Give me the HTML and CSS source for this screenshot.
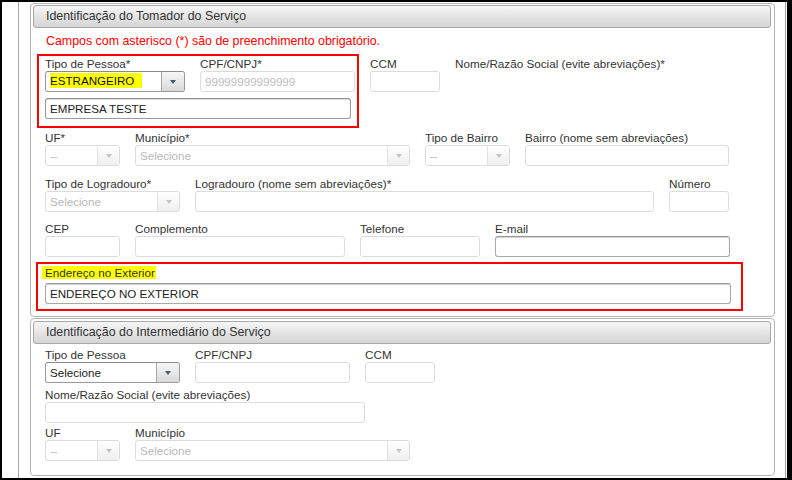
FILE: index.html
```html
<!DOCTYPE html>
<html lang="pt-BR">
<head>
<meta charset="utf-8">
<title>Identificação do Tomador do Serviço</title>
<link rel="stylesheet" href="styles.css">
</head>
<body>
<div class="screen">
  <div class="page">
    <section class="panel p1">
      <div class="phead">Identificação do Tomador do Serviço</div>
      <div class="pbody">
        <p class="note">Campos com asterisco (*) são de preenchimento obrigatório.</p>

        <div class="row r1">
          <div class="redbox rb1">
            <div class="row">
              <div class="field">
                <label>Tipo de Pessoa*</label>
                <div class="ctl sel on w140"><span class="v"><span class="hl">ESTRANGEIRO</span></span><span class="b"><i></i></span></div>
              </div>
              <div class="field">
                <label>CPF/CNPJ*</label>
                <div class="ctl dis w155">99999999999999</div>
              </div>
            </div>
            <div class="ctl on w306 mt6">EMPRESA TESTE</div>
          </div>
          <div class="field pt3 ccm1">
            <label>CCM</label>
            <div class="ctl w70"></div>
          </div>
          <div class="field pt3 nome1">
            <label>Nome/Razão Social (evite abreviações)*</label>
          </div>
        </div>

        <div class="row r2">
          <div class="field"><label>UF*</label><div class="ctl sel w75"><span class="v dim">--</span><span class="b"><i></i></span></div></div>
          <div class="field"><label>Município*</label><div class="ctl sel w275"><span class="v dim">Selecione</span><span class="b"><i></i></span></div></div>
          <div class="field"><label>Tipo de Bairro</label><div class="ctl sel w85"><span class="v dim">--</span><span class="b"><i></i></span></div></div>
          <div class="field"><label>Bairro (nome sem abreviações)</label><div class="ctl w204"></div></div>
        </div>

        <div class="row r3">
          <div class="field"><label>Tipo de Logradouro*</label><div class="ctl sel w135"><span class="v dim">Selecione</span><span class="b"><i></i></span></div></div>
          <div class="field"><label>Logradouro (nome sem abreviações)*</label><div class="ctl w459"></div></div>
          <div class="field"><label>Número</label><div class="ctl w60"></div></div>
        </div>

        <div class="row r4">
          <div class="field"><label>CEP</label><div class="ctl w75"></div></div>
          <div class="field"><label>Complemento</label><div class="ctl w210"></div></div>
          <div class="field"><label>Telefone</label><div class="ctl w120"></div></div>
          <div class="field"><label>E-mail</label><div class="ctl focus w235"></div></div>
        </div>

        <div class="redbox rb2">
          <label class="lbl2"><span class="hl2">Endereço no Exterior</span></label>
          <div class="ctl on2 w686">ENDEREÇO NO EXTERIOR</div>
        </div>
      </div>
    </section>

    <section class="panel p2">
      <div class="phead">Identificação do Intermediário do Serviço</div>
      <div class="pbody">
        <div class="row q1">
          <div class="field"><label>Tipo de Pessoa</label><div class="ctl sel on w135"><span class="v">Selecione</span><span class="b"><i></i></span></div></div>
          <div class="field"><label>CPF/CNPJ</label><div class="ctl w155"></div></div>
          <div class="field"><label>CCM</label><div class="ctl w70"></div></div>
        </div>
        <div class="row q2">
          <div class="field"><label>Nome/Razão Social (evite abreviações)</label><div class="ctl w320"></div></div>
        </div>
        <div class="row q3">
          <div class="field"><label>UF</label><div class="ctl sel w75"><span class="v dim">--</span><span class="b"><i></i></span></div></div>
          <div class="field"><label>Município</label><div class="ctl sel w275"><span class="v dim">Selecione</span><span class="b"><i></i></span></div></div>
        </div>
      </div>
    </section>
  </div>
</div>
</body>
</html>
```

FILE: styles.css
```css
* { box-sizing: border-box; }
html, body { margin: 0; padding: 0; background: #fff; }
body { font-family: "Liberation Sans", Arial, sans-serif; color: #333; }

.screen {
  width: 792px; height: 480px;
  border-style: solid; border-color: #000;
  border-width: 2px 5px 2px 2px;
  background: #fff; overflow: hidden;
}
.page {
  margin-left: 16px; width: 768px; height: 100%;
  border-left: 1px solid #a4a4a4; border-right: 1px solid #a4a4a4;
  padding: 1px 0 0 11px;
}

.panel {
  width: 745px;
  border: 1px solid #b4b4b4; border-radius: 4px;
  padding: 1px 3px 5px 2px;
}
.p2 { margin-top: 1px; padding-top: 2px; padding-bottom: 14px; }

.phead {
  height: 23px;
  border: 1px solid #a8a8a8; border-radius: 3px;
  background: linear-gradient(#f5f5f5, #d5d5d5);
  font-size: 12.4px; line-height: 21px;
  padding-left: 12px; color: #333;
}
.pbody { padding-left: 12px; }

.note {
  margin: 6px 0 0; padding-left: 1px;
  font-size: 12.4px; line-height: 14px; color: #f00;
}

.row { display: flex; align-items: flex-start; gap: 15px; }
.field label, .lbl2 {
  display: block; font-size: 11.7px; line-height: 14px;
  white-space: nowrap; color: #333;
}

.r1 { margin-top: 6px; gap: 0; }
.r2 { margin-top: 3px; }
.r3 { margin-top: 11px; }
.r4 { margin-top: 10px; }
.q1 { margin-top: 4px; }
.q2 { margin-top: 5px; }
.q3 { margin-top: 3px; }

.pt3 { padding-top: 3px; }
.ccm1 { margin-left: 11px; }
.nome1 { margin-left: 15px; }
.mt6 { margin-top: 6px; }

.redbox { border: 2px solid #f00; }
.rb1 { margin-left: -8px; width: 322px; padding: 1px 2px 7px 6px; }
.rb2 { margin-top: 5px; margin-left: -9px; width: 707px; padding: 2px 10px 5px 7px; }
.lbl2 { margin-bottom: 3px; }
.hl2 { background: #ffff00; padding: 0 1px 0 3px; margin-left: -3px; }

.ctl {
  height: 21px;
  border: 1px solid #dcdcdc; border-radius: 3px;
  background: #fff;
  font-size: 11.6px; line-height: 19px;
  padding-left: 4px; color: #222;
  white-space: nowrap; overflow: hidden;
}
.ctl.dis { color: #bdbdbd; }
.ctl.on {
  border-color: #9a9a9a; border-top-color: #8a8a8a;
  box-shadow: inset 0 1px 1px rgba(0,0,0,0.12);
}
.ctl.on2, .ctl.focus {
  border-color: #a9a9a9; border-top-color: #969696;
  box-shadow: inset 0 1px 1px rgba(0,0,0,0.18);
}

.sel { display: flex; padding-left: 0; }
.sel .v { flex: 1; padding-left: 4px; overflow: hidden; }
.sel .v.dim { color: #b8b8b8; }
.sel .b {
  width: 22px; flex: none;
  border-left: 1px solid #e2e2e2;
  background: linear-gradient(#ffffff, #efefef);
  display: flex; align-items: center; justify-content: center;
}
.sel .b i {
  display: block; width: 0; height: 0;
  border-left: 3.5px solid transparent; border-right: 3.5px solid transparent;
  border-top: 4px solid #c4c4c4;
}
.sel.on { box-shadow: none; }
.sel.on .b {
  width: 23px;
  border-left-color: #a6a6a6;
  background: linear-gradient(#f7f7f7, #d9d9d9);
}
.sel.on .b i { border-top-color: #4a5a6a; }

.hl {
  display: inline-block; background: #ffff00;
  line-height: 15px; height: 15px; margin-top: 1px;
  padding-right: 8px; vertical-align: top; color: #111;
}

.w60 { width: 60px; } .w70 { width: 70px; } .w75 { width: 75px; }
.w85 { width: 85px; } .w120 { width: 120px; } .w135 { width: 135px; }
.w140 { width: 140px; } .w155 { width: 155px; } .w204 { width: 204px; }
.w210 { width: 210px; } .w235 { width: 235px; } .w275 { width: 275px; }
.w306 { width: 306px; } .w320 { width: 320px; } .w459 { width: 459px; }
.w686 { width: 686px; }
```
